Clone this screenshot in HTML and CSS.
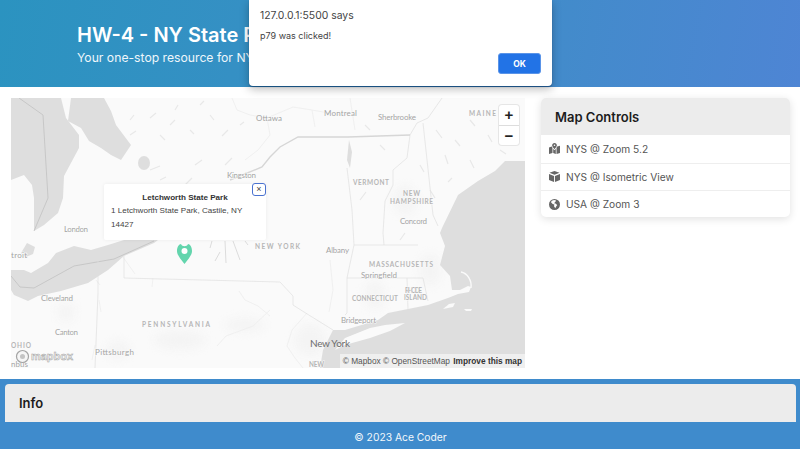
FILE: index.html
```html
<!DOCTYPE html>
<html lang="en">
<head>
<meta charset="utf-8">
<title>HW-4 - NY State Parks</title>
<link rel="stylesheet" href="styles.css">
</head>
<body>
<header class="hero">
  <h1 class="hero-title">HW-4 - NY State Parks</h1>
  <p class="hero-sub">Your one-stop resource for NY State Parks</p>
</header>

<main class="content">
  <section class="map">
    <svg class="map-art" viewBox="11 98 514 270" width="514" height="270" aria-hidden="true">
      <rect class="land" x="11" y="98" width="514" height="270"/>
      <g class="urban">
        <ellipse cx="180" cy="340" rx="26" ry="10"/>
        <ellipse cx="245" cy="325" rx="20" ry="7"/>
        <ellipse cx="310" cy="340" rx="16" ry="16"/>
        <ellipse cx="375" cy="295" rx="10" ry="14"/>
        <ellipse cx="430" cy="270" rx="11" ry="16"/>
        <ellipse cx="66" cy="312" rx="8" ry="10"/>
        <ellipse cx="118" cy="350" rx="12" ry="9"/>
        <ellipse cx="405" cy="200" rx="12" ry="14"/>
      </g>
      <g class="shapes">
        <g class="water">
          <path d="M11 98H61L66 118 79 135V148L64 176 63 198 58 213 44 225 34 231V198L32 185 24 175 11 180Z"/>
          <path d="M71 98H104L111 111 116 125 131 145 121 160 111 155 101 148 89 141 81 128 68 121Z"/>
          <ellipse cx="144" cy="163" rx="6" ry="7"/>
          <path d="M11 270L24 270 31 273 48 263 56 253 74 246 91 250 108 245 124 240 158 240 154 243 124 256 108 270 88 283 61 291 38 296 28 301 14 295 11 290Z"/>
          <path d="M21 253L27 243 35 247 33 254 26 257Z"/>
          <path d="M525 161H505L495 171 478 181 458 195 442 228 440 233 445 246 440 265 450 276 452 290 448 298 428 305 408 309 388 313 378 320 345 330 333 330 323 350 320 368H525Z"/>
          <path d="M349 140L352 152 350 168 347 160Z"/>
        </g>
        <g class="white-land">
          <path d="M335 350L345 338 370 328 385 325 405 323 390 331 370 338 345 345Z"/>
          <path d="M448 298L449 290 460 290 468 286 471 287 469 292 458 294Z"/>
          <path d="M443 309L449 304 455 303 453 307Z"/>
          <path d="M464 309L472 309 471 311 466 311Z"/>
        </g>
        <path class="cape" d="M461 272C467 273 472 280 471 288"/>
        <g class="rivers">
          <path d="M232 98L237 110 250 115 267 118 293 107 312 110 315 127"/>
          <path d="M267 118L270 135 258 150 245 160"/>
          <path d="M307 313L292 330 287 346 295 358 303 368"/>
          <path d="M217 346L226 336 253 326 270 310"/>
          <path d="M239 291L245 300 258 306 270 316"/>
          <path d="M330 260L333 290 329 312"/>
          <path d="M96 280L100 285 M99 300L101 312 M95 345L92 360"/>
          <path d="M123 257L135 274 M153 278L152 287"/>
          <path d="M355 130L350 98 M312 110L345 116"/>
        </g>
        <g class="lakes">
          <path d="M160 135L165 140 M190 130L194 134 M210 115L214 120 M150 170L160 166 M195 165L202 160 M360 200L366 192"/>
          <path d="M185 185L192 178 M160 180L166 177 M225 165L232 158 M170 125L175 120 M130 120L134 115 M400 240L405 233"/>
          <path d="M240 125L244 122 M150 118L156 113 M175 110L178 105 M200 105L204 101 M222 136L228 130 M130 135L136 131"/>
          <path d="M436 130L442 138 M455 140L460 146 M470 120L475 126 M488 135L492 142 M445 155L448 164 M470 160L474 168"/>
          <path d="M448 182L452 178 M430 190L435 198 M420 165L424 172 M500 150L506 154 M380 145L385 150 M365 125L370 130"/>
        </g>
        <g class="fingers">
          <path d="M212 241L210 248 M225 241L226 263 M233 241L240 260 M220 252L215 261 M245 241L248 245"/>
        </g>
        <g class="borders-water">
          <path d="M19 98L43 115 48 198 34 231"/>
          <path d="M11 276L20 287 34 288 74 266 114 259 154 241"/>
        </g>
        <g class="borders">
          <path d="M124 256V278L280 282 293 296 293 305 304 312 333 330"/>
          <path d="M98 261V293L95 368"/>
          <path d="M423 123L433 215 438 226"/>
          <path d="M410 135L417 123 428 118 442 98"/>
          <path d="M410 135L407 158 393 170 393 185 385 201 383 233 384 245"/>
          <path d="M347 168L352 210 354 245 347 278V313L345 315"/>
          <path d="M354 245H418"/>
          <path d="M347 278H423L428 301"/>
          <path d="M407 278L408 310"/>
        </g>
        <path class="border-major" d="M230 180L262 167 270 157 280 147 298 137H348L410 135"/>
      </g>
      <g class="label-city">
        <text x="256" y="121" textLength="26">Ottawa</text>
        <text x="324" y="116" textLength="33">Montreal</text>
        <text x="378" y="120" textLength="38">Sherbrooke</text>
        <text x="227" y="178" textLength="29">Kingston</text>
        <text x="400" y="224" textLength="27">Concord</text>
        <text x="64" y="232" textLength="24">London</text>
        <text x="11" y="258" textLength="16">troit</text>
        <text x="326" y="253" textLength="23">Albany</text>
        <text x="361" y="278" textLength="36">Springfield</text>
        <text x="341" y="323" textLength="35">Bridgeport</text>
        <text x="41" y="301" textLength="32">Cleveland</text>
        <text x="55" y="335" textLength="23">Canton</text>
        <text x="95" y="355" textLength="39">Pittsburgh</text>
        <text x="11" y="367" textLength="17">nbus</text>
      </g>
      <g class="label-state">
        <text x="469" y="116" textLength="27">MAINE</text>
        <text x="353" y="185" textLength="36">VERMONT</text>
        <text x="403" y="196" textLength="17">NEW</text>
        <text x="390" y="204" textLength="43">HAMPSHIRE</text>
        <text x="255" y="249" textLength="45">NEW YORK</text>
        <text x="369" y="267" textLength="64">MASSACHUSETTS</text>
        <text x="352" y="301" textLength="46">CONNECTICUT</text>
        <text x="405" y="293" textLength="17">RHODE</text>
        <text x="404" y="300" textLength="23">ISLAND</text>
        <text x="142" y="327" textLength="68">PENNSYLVANIA</text>
        <text x="11" y="348" textLength="20">OHIO</text>
        <text x="309" y="367" textLength="15">NEW</text>
      </g>
      <text class="label-metro" x="310" y="347" textLength="40">New York</text>
      <g class="mapbox-logo">
        <circle cx="22.500" cy="356.500" r="6"/>
        <circle class="mapbox-dot" cx="22.500" cy="356.500" r="2.500"/>
        <text x="31" y="360" textLength="42">mapbox</text>
      </g>
      <path class="marker" d="M184.500 264C180 258 177 255 177 251 177 247 179 244 181 244 182 247 187 247 188 244 190 244 192 247 192 251 192 255 189 258 184.500 264Z"/>
      <circle class="marker-hole" cx="184.500" cy="251" r="3"/>
    </svg>

    <div class="zoom-control">
      <div class="zoom-btn">+</div>
      <div class="zoom-btn">−</div>
    </div>

    <div class="popup">
      <h4 class="popup-title">Letchworth State Park</h4>
      <p class="popup-text">1 Letchworth State Park, Castile, NY 14427</p>
      <div class="popup-close">×</div>
      <div class="popup-tip"></div>
    </div>

    <div class="attribution">© Mapbox © OpenStreetMap <b class="improve">Improve this map</b></div>
  </section>

  <aside class="card">
    <h2 class="card-head">Map Controls</h2>
    <ul class="list">
      <li class="list-item">
        <svg class="icon" viewBox="0 0 12 12"><path d="M6 0C4.500 0 3.400 1.100 3.400 2.500 3.400 3.800 5 5.600 6 6.800 7 5.600 8.600 3.800 8.600 2.500 8.600 1.100 7.500 0 6 0ZM6 1.600A.9.900 0 1 1 6 3.400.9.900 0 0 1 6 1.600ZM0 5L3 3.900 3.800 5.200V11L0 12ZM4.600 6.200L6 8 7.400 6.200V12L4.600 11ZM8.200 5.200L9 3.900 12 3V11L8.200 12Z"/></svg>
        NYS @ Zoom 5.2
      </li>
      <li class="list-item">
        <svg class="icon" viewBox="0 0 12 12"><path d="M6 0L11.500 2 6 4.200 .5 2ZM0 3.200L5.500 5.400V12L0 9.700ZM12 3.200V9.700L6.500 12V5.400Z"/></svg>
        NYS @ Isometric View
      </li>
      <li class="list-item">
        <svg class="icon" viewBox="0 0 12 12"><path fill-rule="evenodd" d="M6 0A6 6 0 1 1 6 12 6 6 0 0 1 6 0ZM3 1.800L2.200 3.500 4 5.500 5.800 6 5.500 7.800 6.800 10 8 8 9 6.500 7 5 5.500 4.500 6.800 3.200 7.800 1.500 5.500 1.200Z"/></svg>
        USA @ Zoom 3
      </li>
    </ul>
  </aside>
</main>

<footer class="footer">
  <section class="info"><h2 class="info-title">Info</h2></section>
  <p class="copyright">© 2023 Ace Coder</p>
</footer>

<div class="dialog" role="alertdialog">
  <p class="dialog-origin">127.0.0.1:5500 says</p>
  <p class="dialog-msg">p79 was clicked!</p>
  <div class="dialog-actions"><button class="dialog-ok">OK</button></div>
</div>
</body>
</html>
```

FILE: styles.css
```css
* { box-sizing: border-box; }
html, body { margin: 0; padding: 0; }
body {
  width: 800px;
  height: 449px;
  overflow: hidden;
  display: flex;
  flex-direction: column;
  position: relative;
  background: #fff;
  font-family: Inter, "Liberation Sans", sans-serif;
  color: #222;
}

/* Header */
.hero {
  height: 87px;
  flex: none;
  padding: 23px 0 0 77px;
  background: linear-gradient(100deg, #2b93c0 0%, #3f8dc8 60%, #4e85d4 100%);
  color: #fff;
}
.hero-title { margin: 0; font-size: 20px; line-height: 24px; font-weight: 600; }
.hero-sub { margin: 2px 0 0; font-size: 12.200px; line-height: 18px; color: #eef6fb; }

/* Main */
.content {
  flex: none;
  height: 292px;
  display: flex;
  align-items: flex-start;
  gap: 16px;
  padding: 11px 10px 11px 11px;
}

/* Map */
.map { position: relative; width: 514px; height: 270px; flex: none; overflow: hidden; }
.map-art { display: block; }
.land { fill: #fafafa; }
.urban { filter: blur(4px); }
.urban ellipse { fill: #f4f4f4; }
.shapes { filter: blur(.3px); }
.water path, .water ellipse { fill: #dedede; }
.white-land path { fill: #fafafa; }
.cape { fill: none; stroke: #fafafa; stroke-width: 1.400; }
.rivers path { fill: none; stroke: #eeeeee; stroke-width: .9; }
.lakes path { fill: none; stroke: #e8e8e8; stroke-width: 1.200; }
.fingers path { fill: none; stroke: #dcdcdc; stroke-width: 1; }
.borders-water path { fill: none; stroke: #bdbdbd; stroke-width: .7; }
.borders path { fill: none; stroke: #e0e0e0; stroke-width: .7; }
.border-major { fill: none; stroke: #d6d6d6; stroke-width: 1.400; }
.label-city text {
  font: 400 8px Lato, "Liberation Sans", sans-serif;
  fill: #a4a4a4;
  stroke: #fafafa;
  stroke-width: 1;
  paint-order: stroke;
}
.label-state text {
  font: 700 6.500px Lato, "Liberation Sans", sans-serif;
  fill: #b6b6b6;
  stroke: #fafafa;
  stroke-width: 1;
  paint-order: stroke;
}
.label-metro { font: 400 10px Lato, "Liberation Sans", sans-serif; fill: #6c6c6c; }
.mapbox-logo circle { fill: #f6f6f6; stroke: #a4a4a4; stroke-width: 1.200; }
.mapbox-logo .mapbox-dot { fill: #c4c4c4; stroke: none; }
.mapbox-logo text {
  font: 700 11px "Liberation Sans", sans-serif;
  fill: #f4f4f4;
  stroke: #a4a4a4;
  stroke-width: .5;
}
.marker { fill: #63d5ad; }
.marker-hole { fill: #fff; }

.zoom-control {
  position: absolute;
  top: 7px;
  left: 488px;
  width: 20px;
  border-radius: 3px;
  background: #fff;
  box-shadow: 0 0 0 1px rgba(0, 0, 0, .08);
}
.zoom-btn {
  height: 20px;
  text-align: center;
  font: 700 15px/19px "Liberation Sans", sans-serif;
  color: #222;
}
.zoom-btn + .zoom-btn { border-top: 1px solid #ddd; }

.popup {
  position: absolute;
  left: 93px;
  top: 86px;
  width: 162px;
  height: 56px;
  padding: 8px 7px 0;
  background: #fff;
  border-radius: 2px;
  box-shadow: 0 0 4px rgba(0, 0, 0, .06);
  font-family: "Liberation Sans", sans-serif;
  color: #333;
}
.popup-title { margin: 0; font-size: 8.100px; line-height: 11px; font-weight: 700; text-align: center; }
.popup-text { margin: 1px 0 0; font-size: 8.100px; line-height: 14px; color: #444; }
.popup-close {
  position: absolute;
  top: -1px;
  right: 0;
  width: 14px;
  height: 13px;
  border: 1.200px solid #4a72d0;
  border-radius: 3px;
  font-size: 9px;
  line-height: 10px;
  text-align: center;
  color: #444;
}
.popup-tip {
  position: absolute;
  left: 76px;
  bottom: -3px;
  width: 8px;
  height: 8px;
  background: #fff;
  transform: rotate(45deg);
  z-index: -1;
}

.attribution {
  position: absolute;
  right: 0;
  bottom: 0;
  height: 14px;
  padding: 0 3px;
  background: rgba(255, 255, 255, .5);
  font: 8.300px/14px "Liberation Sans", sans-serif;
  color: #555;
  white-space: nowrap;
}
.improve { color: #333; margin-left: 1px; }

/* Card */
.card {
  width: 249px;
  flex: none;
  background: #fff;
  border-radius: 5px;
  overflow: hidden;
  box-shadow: 0 2px 8px rgba(0, 0, 0, .12);
}
.card-head {
  margin: 0;
  height: 37px;
  padding-left: 14px;
  background: #ececec;
  font-size: 13px;
  line-height: 38px;
  font-weight: 600;
  color: #1c1c1c;
}
.list { margin: 0; padding: 0; list-style: none; }
.list-item {
  height: 27.500px;
  display: flex;
  align-items: center;
  gap: 6px;
  padding-left: 8px;
  font-size: 10.200px;
  color: #555;
}
.list-item + .list-item { border-top: 1px solid #eee; }
.list-item:last-child { height: 27px; }
.icon { width: 11px; height: 11px; flex: none; fill: #666; }

/* Footer */
.footer {
  flex: 1;
  background: #3f8bcc;
  padding: 5px 4px 0 5px;
  display: flex;
  flex-direction: column;
}
.info {
  height: 38px;
  flex: none;
  background: #ececec;
  border-radius: 4px 4px 0 0;
  padding-left: 14px;
}
.info-title { margin: 0; font-size: 13px; line-height: 38px; font-weight: 600; color: #1c1c1c; }
.copyright {
  margin: 0;
  flex: 1;
  text-align: center;
  font-size: 10.300px;
  line-height: 31px;
  color: #f2f7fb;
}

/* Dialog */
.dialog {
  position: absolute;
  top: 0;
  left: 249px;
  width: 303px;
  height: 86px;
  padding: 9px 11px 0;
  background: #fff;
  border-radius: 0 0 4px 4px;
  box-shadow: 0 1px 1px rgba(0, 40, 90, .5), 0 3px 10px rgba(0, 0, 0, .28);
}
.dialog-origin { margin: 0; font-size: 10.400px; line-height: 13px; color: #444; }
.dialog-msg { margin: 8px 0 0; font-size: 9px; line-height: 12px; color: #444; }
.dialog-actions { display: flex; justify-content: flex-end; margin-top: 11px; }
.dialog-ok {
  width: 43px;
  height: 21px;
  padding: 0;
  border: 1px solid #5a94e8;
  border-radius: 3px;
  background: #2273e6;
  color: #fff;
  font: 700 8.500px Inter, sans-serif;
}
```
